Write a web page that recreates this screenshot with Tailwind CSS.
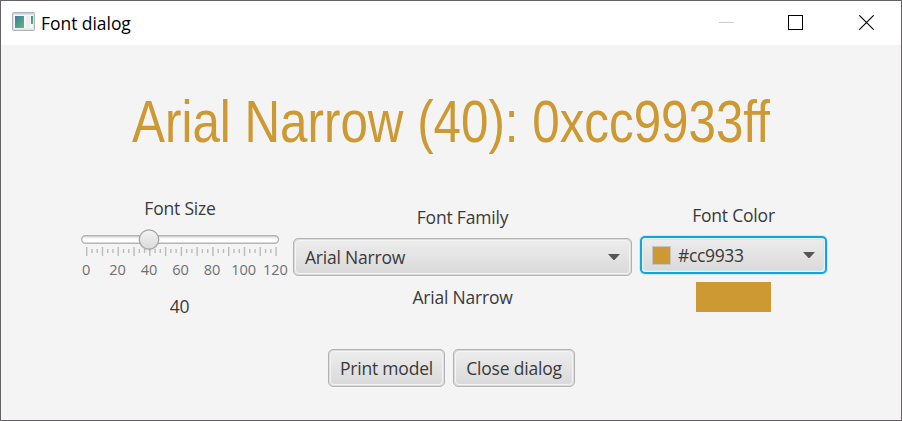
<!DOCTYPE html>
<html lang="en">
<head>
<meta charset="utf-8">
<title>Font dialog</title>
<script src="https://cdn.jsdelivr.net/npm/@tailwindcss/browser@4"></script>
</head>
<body class="w-[902px] h-[421px] overflow-hidden">
<main class="w-[902px] h-[421px] flex flex-col border border-[#656164] bg-[#f4f4f4] font-['Open_Sans','Noto_Sans',sans-serif] font-normal text-[17.5px] leading-6 tracking-[-0.2px] text-[#3a3a3a] whitespace-nowrap">
  <header class="h-11 shrink-0 bg-white flex items-start text-black">
    <svg class="ml-[11px] mt-[11px]" width="23" height="19" viewBox="0 0 23 19">
      <defs><linearGradient id="pic" x1="0" y1="0" x2="1" y2="1"><stop offset="0" stop-color="#3b7c9c"/><stop offset="1" stop-color="#62b77c"/></linearGradient></defs>
      <rect x=".5" y=".5" width="22" height="18" rx="1" fill="#dfe3e6" stroke="#aeb3b7"/>
      <path d="M1 1.500h21" stroke="#cbd1d5"/>
      <rect x="2" y="3" width="19" height="13.500" fill="#f8f8f8"/>
      <rect x="3" y="4" width="9" height="12" fill="url(#pic)"/>
      <rect x="14" y="4" width="4" height="12" fill="#eee"/>
      <rect x="19" y="4" width="2" height="8" fill="url(#pic)"/>
    </svg>
    <h1 class="ml-[6px] mt-[10px] tracking-[-0.05px]">Font dialog</h1>
    <div class="ml-auto mt-[14px] mr-[27px] flex gap-[54px]">
      <svg width="15" height="15"><path d="M0 7.500h15" stroke="#ccc"/></svg>
      <svg width="15" height="15"><rect x=".5" y=".5" width="14" height="14" fill="none" stroke="#000"/></svg>
      <svg class="ml-[2px]" width="15" height="15"><path d="M.3.3l14.400 14.400M14.700.3L.3 14.700" stroke="#000" stroke-width="1.100"/></svg>
    </div>
  </header>

  <h2 class="mt-[43px] h-[68px] text-center font-['Liberation_Sans',Arial,sans-serif] font-normal text-[60px] leading-[68px] tracking-normal scale-x-[0.822] text-[#cc9933]">Arial Narrow (40): 0xcc9933ff</h2>

  <div class="mt-[40px] pl-[75px] flex items-start h-[140px]">
    <section class="w-[217px] flex flex-col">
      <div class="w-[208px] text-center">Font Size</div>
      <svg class="mt-[4px]" width="217" height="62" viewBox="76 224 217 62">
        <defs>
          <linearGradient id="track" x1="0" y1="0" x2="0" y2="1"><stop offset="0" stop-color="#dedede"/><stop offset=".5" stop-color="#fff"/><stop offset="1" stop-color="#fff"/></linearGradient>
          <linearGradient id="thumb" x1="0" y1="0" x2="0" y2="1"><stop offset="0" stop-color="#f3f3f3"/><stop offset="1" stop-color="#dadada"/></linearGradient>
        </defs>
        <path d="M86 251.500H277" stroke="#bbb" stroke-width="9" stroke-dasharray="1.400 14.380"/>
        <path d="M91.260 251H275" stroke="#bbb" stroke-width="4" stroke-dasharray="1.400 3.860 1.400 9.120"/>
        <rect x="81.700" y="235.700" width="196.800" height="7.600" rx="3.800" fill="url(#track)" stroke="#b5b5b5" stroke-width="1.400"/>
        <circle cx="149" cy="240.500" r="10.500" fill="#000" fill-opacity=".07"/>
        <circle cx="149" cy="239.500" r="9.700" fill="url(#thumb)" stroke="#a6a6a6" stroke-width="1.300"/>
        <g fill="#707070" font-size="14.600" letter-spacing="-.1" text-anchor="middle">
          <text x="86" y="275">0</text><text x="117.500" y="275">20</text><text x="149" y="275">40</text><text x="180.600" y="275">60</text><text x="212" y="275">80</text><text x="243.700" y="275">100</text><text x="275.300" y="275">120</text>
        </g>
      </svg>
      <div class="mt-[8px] w-[207px] text-center">40</div>
    </section>
    <section class="w-[339px] mt-[9px] flex flex-col">
      <div class="text-center">Font Family</div>
      <div class="mt-[9px] h-[38px] rounded-[5px] border border-[#b2b2b2] p-px bg-[#dcdcdc] shadow-[0_1px_0_#fafafa]">
        <div class="h-full rounded-[4px] border border-[#f4f4f4] bg-linear-to-b from-[#ececec] to-[#dadada] pl-[9px] pr-[9px] flex items-center justify-between">
          <span>Arial Narrow</span>
          <svg width="12" height="6"><path d="M0 0h12L7 5.500Q6 6.500 5 5.500z" fill="#555"/></svg>
        </div>
      </div>
      <div class="mt-[9px] text-center">Arial Narrow</div>
    </section>
    <section class="ml-2 w-[187px] mt-[7px] flex flex-col items-center">
      <div>Font Color</div>
      <div class="mt-[9px] w-[187px] h-[38px] rounded-[5px] border-2 border-[#12a5d9] p-[1px] bg-[#e7f3f7] shadow-[0_0_0_1px_#cce9f4]">
        <div class="h-full rounded-[3px] border border-[#d8e5ea] bg-linear-to-b from-[#ececec] to-[#dadada] pl-[8px] pr-[8px] flex items-center">
          <i class="size-[19px] bg-[#cc9933] border border-[#c4c4c4]"></i>
          <span class="ml-[7px] tracking-[-0.35px]">#cc9933</span>
          <svg class="ml-auto" width="12" height="6"><path d="M0 0h12L7 5.500Q6 6.500 5 5.500z" fill="#555"/></svg>
        </div>
      </div>
      <div class="mt-[8px] w-[75px] h-[30px] bg-[#cc9933]"></div>
    </section>
  </div>

  <footer class="mt-[13px] pl-[327px] flex gap-2">
    <button class="w-[117px] h-[38px] rounded-[5px] border border-[#b2b2b2] p-px bg-[#dcdcdc] shadow-[0_1px_0_#fafafa]"><span class="h-full rounded-[4px] border border-[#f4f4f4] bg-linear-to-b from-[#ececec] to-[#dadada] flex items-center justify-center">Print model</span></button>
    <button class="w-[122px] h-[38px] rounded-[5px] border border-[#b2b2b2] p-px bg-[#dcdcdc] shadow-[0_1px_0_#fafafa]"><span class="h-full rounded-[4px] border border-[#f4f4f4] bg-linear-to-b from-[#ececec] to-[#dadada] flex items-center justify-center">Close dialog</span></button>
  </footer>
</main>
</body>
</html>
